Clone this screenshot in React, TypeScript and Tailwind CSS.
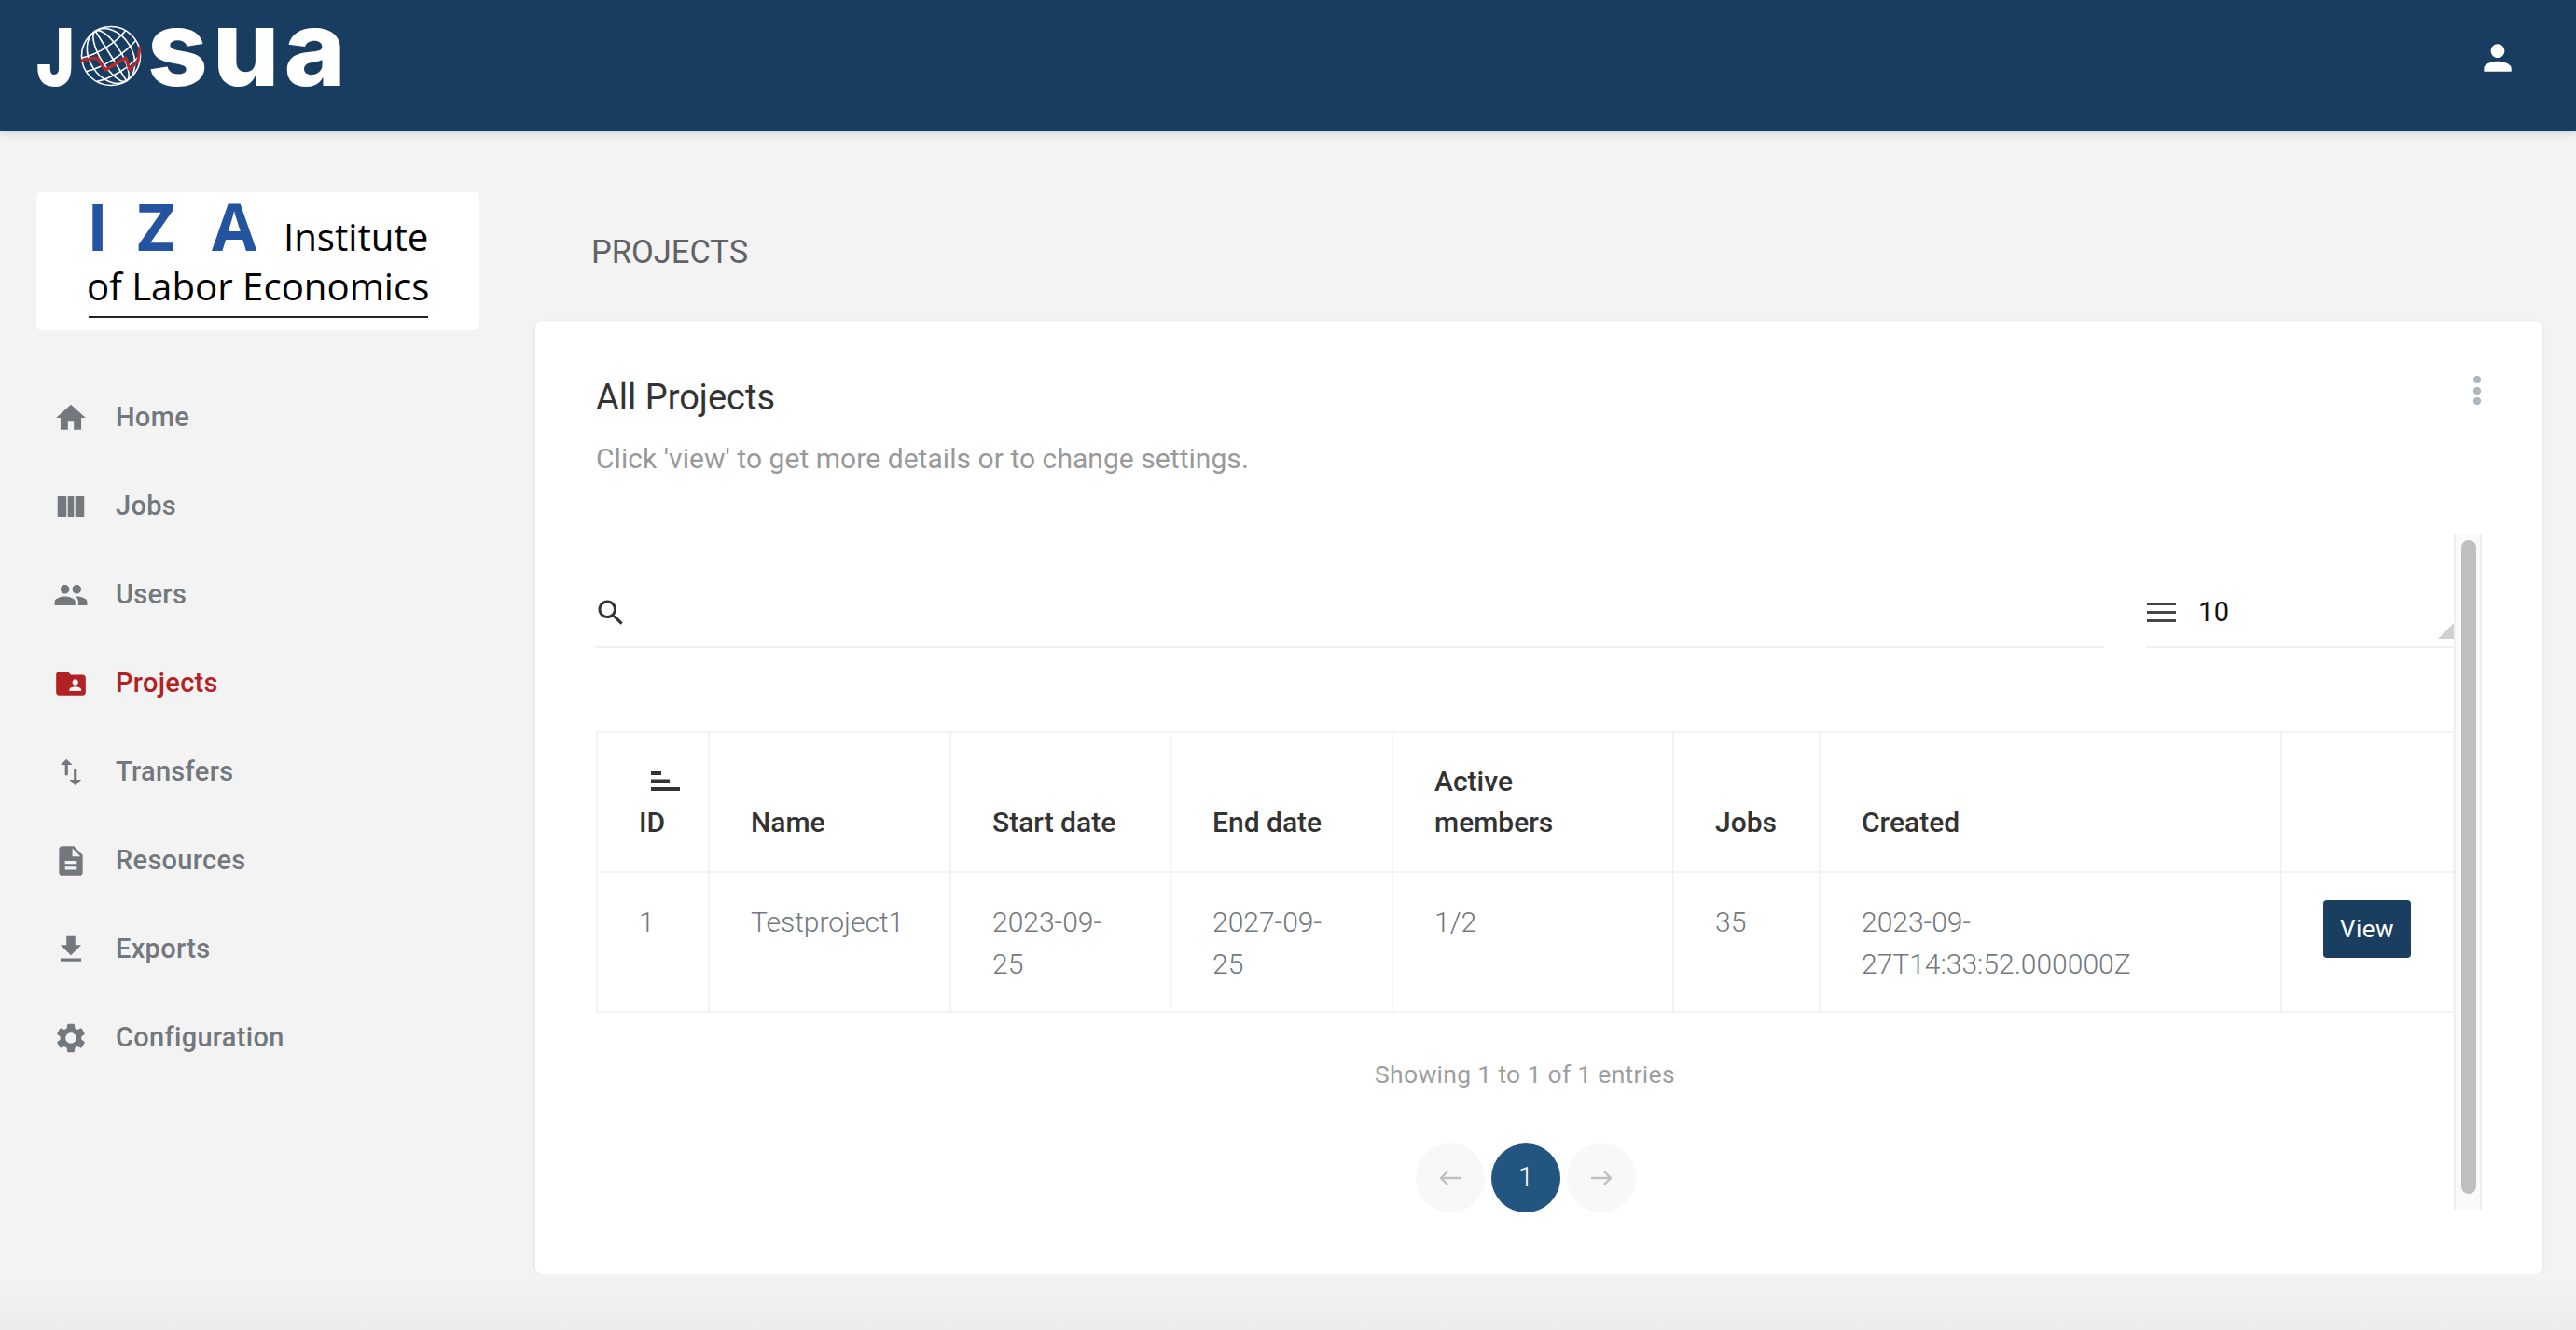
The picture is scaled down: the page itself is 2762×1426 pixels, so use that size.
const navItems: { label: string; path: string; active?: boolean }[] = [
  { label: 'Home', path: 'M10 20v-6h4v6h5v-8h3L12 3 2 12h3v8z' },
  { label: 'Jobs', path: 'M3.6 5h4.8a.6.6 0 0 1 .6.6v12.8a.6.6 0 0 1-.6.6H3.6a.6.6 0 0 1-.6-.6V5.6a.6.6 0 0 1 .6-.6zm6.9 0h3a.6.6 0 0 1 .6.6v12.8a.6.6 0 0 1-.6.6h-3a.6.6 0 0 1-.6-.6V5.6a.6.6 0 0 1 .6-.6zm5.1 0h4.8a.6.6 0 0 1 .6.6v12.8a.6.6 0 0 1-.6.6h-4.8a.6.6 0 0 1-.6-.6V5.6a.6.6 0 0 1 .6-.6z' },
  { label: 'Users', path: 'M16 11c1.66 0 2.99-1.34 2.99-3S17.66 5 16 5c-1.66 0-3 1.34-3 3s1.34 3 3 3zm-8 0c1.66 0 2.99-1.34 2.99-3S9.66 5 8 5C6.34 5 5 6.34 5 8s1.34 3 3 3zm0 2c-2.33 0-7 1.17-7 3.5V19h14v-2.5c0-2.33-4.67-3.5-7-3.5zm8 0c-.29 0-.62.02-.97.05 1.16.84 1.97 1.97 1.97 3.45V19h6v-2.5c0-2.33-4.67-3.5-7-3.5z' },
  { label: 'Projects', active: true, path: 'M20 6h-8l-2-2H4c-1.1 0-1.99.9-1.99 2L2 18c0 1.1.9 2 2 2h16c1.1 0 2-.9 2-2V8c0-1.1-.9-2-2-2zm-5 3c1.1 0 2 .9 2 2s-.9 2-2 2-2-.9-2-2 .9-2 2-2zm4 8h-8v-1c0-1.33 2.67-2 4-2s4 .67 4 2v1z' },
  { label: 'Transfers', path: 'M16 17.01V10h-2v7.01h-3L15 21l4-3.99h-3zM9 3L5 6.99h3V14h2V6.99h3L9 3z' },
  { label: 'Resources', path: 'M14 2H6c-1.1 0-1.99.9-1.99 2L4 20c0 1.1.89 2 1.99 2H18c1.1 0 2-.9 2-2V8l-6-6zm2 16H8v-2h8v2zm0-4H8v-2h8v2zm-3-5V3.5L18.5 9H13z' },
  { label: 'Exports', path: 'M19 9h-4V3H9v6H5l7 7 7-7zM5 18v2h14v-2H5z' },
  { label: 'Configuration', path: 'M19.14 12.94c.04-.3.06-.61.06-.94 0-.32-.02-.64-.07-.94l2.03-1.58c.18-.14.23-.41.12-.61l-1.92-3.32c-.12-.22-.37-.29-.59-.22l-2.39.96c-.5-.38-1.03-.7-1.62-.94l-.36-2.54c-.04-.24-.24-.41-.48-.41h-3.84c-.24 0-.43.17-.47.41l-.36 2.54c-.59.24-1.13.57-1.62.94l-2.39-.96c-.22-.08-.47 0-.59.22L2.74 8.87c-.12.21-.08.47.12.61l2.03 1.58c-.05.3-.09.63-.09.94s.02.64.07.94l-2.03 1.58c-.18.14-.23.41-.12.61l1.92 3.32c.12.22.37.29.59.22l2.39-.96c.5.38 1.03.7 1.62.94l.36 2.54c.05.24.24.41.48.41h3.84c.24 0 .44-.17.47-.41l.36-2.54c.59-.24 1.13-.56 1.62-.94l2.39.96c.22.08.47 0 .59-.22l1.92-3.32c.12-.22.07-.47-.12-.61l-2.01-1.58zM12 15.6c-1.98 0-3.6-1.62-3.6-3.6s1.62-3.6 3.6-3.6 3.6 1.62 3.6 3.6-1.62 3.6-3.6 3.6z' },
]

const columnWidths = [120, 259, 236, 238, 301, 157, 495, 185]

function Globe() {
  return (
    <svg width="66" height="66" viewBox="0 0 66 66" fill="none" stroke="#fff" strokeWidth="1.6" className="shrink-0 translate-y-[1px]">
      <circle cx="33" cy="33" r="31.5" />
      <g transform="rotate(-32 33 33)">
        <ellipse cx="33" cy="33" rx="11" ry="31.5" />
        <ellipse cx="33" cy="33" rx="23" ry="31.5" />
        <path d="M33 1.5v63" />
        <path d="M5 18c16 6 40 6 56 0M1.5 33c18 6 45 6 63 0M5 48c16 6 40 6 56 0" />
      </g>
      <path d="M0.5 38L18 35L27 48L49 35L53 48L62 38L64 23" stroke="#b32a2a" strokeWidth="3.2" strokeLinejoin="round" />
    </svg>
  )
}

function Header() {
  return (
    <header className="h-[140px] shrink-0 bg-[#183d61] shadow-[0_3px_8px_rgba(0,0,0,0.14)] flex items-start justify-between pl-[39px] pr-[62px] z-10">
      <div className="flex items-baseline mt-[20px] font-['Inter',sans-serif] text-white">
        <span className="w-[47px] text-[85px] leading-[62px] font-black origin-left scale-x-[0.8]">J</span>
        <Globe />
        <span className="ml-[6px] text-[113px] leading-[62px] font-[800] tracking-[5px]">sua</span>
      </div>
      <svg viewBox="0 0 24 24" className="w-[44px] h-[44px] mt-[40px] fill-white">
        <path d="M12 12c2.21 0 4-1.79 4-4s-1.79-4-4-4-4 1.79-4 4 1.79 4 4 4zm0 2c-2.67 0-8 1.34-8 4v2h16v-2c0-2.66-5.33-4-8-4z" />
      </svg>
    </header>
  )
}

function Sidebar() {
  return (
    <aside className="w-[574px] shrink-0 pl-[39px] pt-[66px]">
      <div className="w-[475px] h-[148px] bg-white rounded-[5px] pl-[54px] font-['Open_Sans',sans-serif] text-black overflow-hidden">
        <div className="flex items-baseline h-[62px] leading-[62px] mt-[5px]">
          <span className="text-[70px] text-[#2454a0] font-bold w-[54px]">I</span>
          <span className="text-[70px] text-[#2454a0] font-bold w-[80px]">Z</span>
          <span className="text-[70px] text-[#2454a0] font-bold w-[77px]">A</span>
          <span className="text-[40.2px]">Institute</span>
        </div>
        <div className="text-[40.2px] leading-[52px] whitespace-nowrap mt-[8px]">of Labor Economics</div>
        <div className="w-[364px] h-[2px] bg-[#222] mt-[6px] ml-[2px]" />
      </div>
      <nav className="mt-[46px] pl-[18px]">
        {navItems.map((item) => (
          <div key={item.label} className={`h-[95px] flex items-center gap-[29px] text-[29px] font-medium tracking-[0.3px] ${item.active ? 'text-[#b32222]' : 'text-[#72787d]'}`}>
            <svg viewBox="0 0 24 24" className="w-[38px] h-[38px] fill-current shrink-0">
              <path d={item.path} />
            </svg>
            {item.label}
          </div>
        ))}
      </nav>
    </aside>
  )
}

function Table() {
  const th = 'border-2 border-[#f3f3f3] px-[44px] pb-[30px] align-bottom text-left font-medium text-[#333] leading-[44px]'
  const td = 'border-2 border-[#f3f3f3] px-[44px] pt-[30px] align-top text-[#72787d] font-light leading-[45px]'
  return (
    <table className="mt-[89px] w-[1991px] table-fixed border-collapse text-[30px]">
      <colgroup>
        {columnWidths.map((w) => (
          <col key={w} style={{ width: w }} />
        ))}
      </colgroup>
      <thead>
        <tr className="h-[150px]">
          <th className={th}>
            <svg width="31" height="21" viewBox="0 0 31 21" className="ml-[13px] mb-[12px] fill-[#333]">
              <rect width="11" height="4" />
              <rect y="8.5" width="20" height="4" />
              <rect y="17" width="31" height="4" />
            </svg>
            ID
          </th>
          <th className={th}>Name</th>
          <th className={th}>Start date</th>
          <th className={th}>End date</th>
          <th className={th}>Active members</th>
          <th className={th}>Jobs</th>
          <th className={th}>Created</th>
          <th className={th} />
        </tr>
      </thead>
      <tbody>
        <tr className="h-[150px]">
          <td className={td}>1</td>
          <td className={td}>Testproject1</td>
          <td className={td}>2023-09-25</td>
          <td className={td}>2027-09-25</td>
          <td className={td}>1/2</td>
          <td className={td}>35</td>
          <td className={td}>2023-09-27T14:33:52.000000Z</td>
          <td className="border-2 border-[#f3f3f3] px-[44px] align-top pt-[29px]">
            <button className="w-[94px] h-[62px] rounded-[4px] bg-[#1a3e60] text-white text-[26px] tracking-[0.5px] font-normal">View</button>
          </td>
        </tr>
      </tbody>
    </table>
  )
}

function Pagination() {
  return (
    <div className="mt-[52px] pl-[2px] flex justify-center gap-[7px]">
      <div className="w-[74px] h-[74px] rounded-full bg-[#f8f8f8] flex items-center justify-center">
        <svg width="24" height="18" viewBox="0 0 24 18" fill="none" stroke="#c0c0c0" strokeWidth="2.4">
          <path d="M23 9H2M9 2L2 9l7 7" />
        </svg>
      </div>
      <div className="w-[74px] h-[74px] rounded-full bg-[#225580] text-white text-[29px] font-light flex items-center justify-center">1</div>
      <div className="w-[74px] h-[74px] rounded-full bg-[#f8f8f8] flex items-center justify-center">
        <svg width="24" height="18" viewBox="0 0 24 18" fill="none" stroke="#c0c0c0" strokeWidth="2.4">
          <path d="M1 9h21M15 2l7 7-7 7" />
        </svg>
      </div>
    </div>
  )
}

function ProjectsCard() {
  return (
    <section className="h-[1022px] bg-white rounded-[7px] shadow-[0_1px_4px_rgba(0,0,0,0.08)] px-[65px]">
      <div className="h-[229px] flex justify-between">
        <div>
          <h2 className="mt-[58px] text-[38px] leading-[48px] text-[#333]">All Projects</h2>
          <p className="mt-[20px] text-[30px] tracking-[0.05px] leading-[44px] text-[#999]">Click 'view' to get more details or to change settings.</p>
        </div>
        <div className="mt-[59px] mr-[1px] flex flex-col gap-[3.5px]">
          <span className="w-[8px] h-[8px] rounded-full bg-[#adb5bd]" />
          <span className="w-[8px] h-[8px] rounded-full bg-[#adb5bd]" />
          <span className="w-[8px] h-[8px] rounded-full bg-[#adb5bd]" />
        </div>
      </div>
      <div className="flex h-[724px]">
        <div className="w-[1992px] shrink-0">
          <div className="mt-[47px] flex gap-[45px]">
            <div className="w-[1617px] h-[75px] border-b-2 border-[#f0f0f0] flex items-center">
              <svg viewBox="0 0 24 24" className="w-[36px] h-[36px] -ml-[2px] fill-[#333]">
                <path d="M15.5 14h-.79l-.28-.27C15.41 12.59 16 11.11 16 9.5 16 5.91 13.09 3 9.5 3S3 5.91 3 9.5 5.91 16 9.5 16c1.61 0 3.09-.59 4.23-1.57l.27.28v.79l5 4.99L20.49 19l-4.99-5zm-6 0C7.01 14 5 11.99 5 9.5S7.01 5 9.5 5 14 7.01 14 9.5 11.99 14 9.5 14z" />
              </svg>
            </div>
            <div className="relative w-[330px] h-[75px] border-b-2 border-[#f0f0f0] flex items-center gap-[24px] pl-[1px]">
              <div className="flex flex-col gap-[5.5px] w-[31px]">
                <span className="h-[3.5px] bg-[#444]" />
                <span className="h-[3.5px] bg-[#444]" />
                <span className="h-[3.5px] bg-[#444]" />
              </div>
              <span className="text-[29px] text-[#111] tracking-[0.5px]">10</span>
              <span className="absolute right-0 bottom-[8px] w-[17px] h-[17px] bg-[#d0d0d0] [clip-path:polygon(100%_0,100%_100%,0_100%)]" />
            </div>
          </div>
          <Table />
          <p className="mt-[44px] text-center text-[26.5px] leading-[44px] text-[#9e9e9e] tracking-[0.3px]">Showing 1 to 1 of 1 entries</p>
          <Pagination />
        </div>
        <div className="w-[30px] h-[724px] border-x-2 border-[#f0f0f0] bg-[#fafafa] pt-[6px] pl-[6px]">
          <div className="w-[16px] h-[701px] rounded-full bg-[#bfbfbf]" />
        </div>
      </div>
    </section>
  )
}

export default function App() {
  return (
    <div className="h-[1426px] overflow-hidden flex flex-col bg-[#f3f3f3] font-['Roboto',sans-serif]">
      <Header />
      <div className="flex flex-1">
        <Sidebar />
        <main className="flex-1 pr-[36px]">
          <h1 className="pl-[60px] mt-[109px] h-[95px] text-[34.5px] leading-[42px] text-[#5f6368] uppercase">Projects</h1>
          <ProjectsCard />
        </main>
      </div>
      <div className="h-[62px] shrink-0 bg-gradient-to-b from-[#f3f3f3] to-[#ececec]" />
    </div>
  )
}
